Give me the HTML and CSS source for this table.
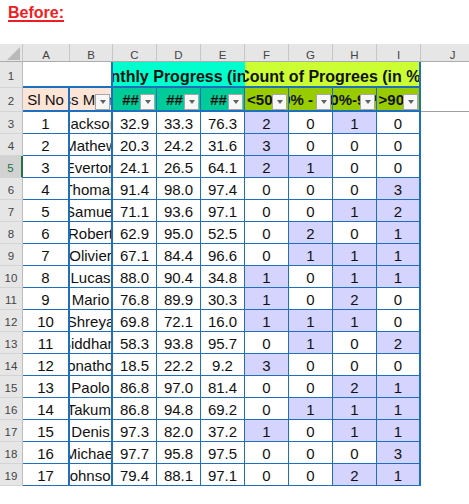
FILE: index.html
```html
<!DOCTYPE html>
<html>
<head>
<meta charset="utf-8">
<link rel="stylesheet" href="styles.css">
</head>
<body>
<div class="title"><span>Before:</span></div>
<div class="viewport">
<div class="sheet">
  <div class="ch corner"><div class="tri"></div></div>
  <div class="ch">A</div><div class="ch">B</div><div class="ch">C</div><div class="ch">D</div><div class="ch">E</div><div class="ch">F</div><div class="ch">G</div><div class="ch">H</div><div class="ch">I</div><div class="ch">J</div>

  <div class="rh">1</div>
  <div class="cell r1 cb span2"></div>
  <div class="cell r1 t1 span3 nobr bold16">Monthly Progress (in %)</div>
  <div class="cell r1 l1 ci span4 bold16">Count of Progrees (in %)</div>
  <div class="j"></div>

  <div class="rh">2</div>
  <div class="cell r2 pe ca">Sl No</div>
  <div class="cell r2 pe cb flt left"><span class="shift">Class Members</span><span class="btn"></span></div>
  <div class="cell r2 t2 flt hash bold">##<span class="btn"></span></div>
  <div class="cell r2 t2 flt hash bold">##<span class="btn"></span></div>
  <div class="cell r2 t2 flt hash bold">##<span class="btn"></span></div>
  <div class="cell r2 l2 flt bold">&lt;50%<span class="btn"></span></div>
  <div class="cell r2 l2 flt bold">50% - 70%<span class="btn"></span></div>
  <div class="cell r2 l2 flt bold">70%-90%<span class="btn"></span></div>
  <div class="cell r2 l2 ci flt bold">&gt;90%<span class="btn"></span></div>
  <div class="j freeze"></div>

  <div class="rh">3</div><div class="cell ca">1</div><div class="cell cb">Jackson</div><div class="cell">32.9</div><div class="cell">33.3</div><div class="cell">76.3</div><div class="cell hl">2</div><div class="cell">0</div><div class="cell hl">1</div><div class="cell ci">0</div><div class="j"></div>
  <div class="rh">4</div><div class="cell ca">2</div><div class="cell cb">Mathew</div><div class="cell">20.3</div><div class="cell">24.2</div><div class="cell">31.6</div><div class="cell hl">3</div><div class="cell">0</div><div class="cell">0</div><div class="cell ci">0</div><div class="j"></div>
  <div class="rh act">5</div><div class="cell ca">3</div><div class="cell cb">Everton</div><div class="cell">24.1</div><div class="cell">26.5</div><div class="cell">64.1</div><div class="cell hl">2</div><div class="cell hl">1</div><div class="cell">0</div><div class="cell ci">0</div><div class="j"></div>
  <div class="rh">6</div><div class="cell ca">4</div><div class="cell cb">Thomas</div><div class="cell">91.4</div><div class="cell">98.0</div><div class="cell">97.4</div><div class="cell">0</div><div class="cell">0</div><div class="cell">0</div><div class="cell ci hl">3</div><div class="j"></div>
  <div class="rh">7</div><div class="cell ca">5</div><div class="cell cb">Samuel</div><div class="cell">71.1</div><div class="cell">93.6</div><div class="cell">97.1</div><div class="cell">0</div><div class="cell">0</div><div class="cell hl">1</div><div class="cell ci hl">2</div><div class="j"></div>
  <div class="rh">8</div><div class="cell ca">6</div><div class="cell cb">Robert</div><div class="cell">62.9</div><div class="cell">95.0</div><div class="cell">52.5</div><div class="cell">0</div><div class="cell hl">2</div><div class="cell">0</div><div class="cell ci hl">1</div><div class="j"></div>
  <div class="rh">9</div><div class="cell ca">7</div><div class="cell cb">Olivier</div><div class="cell">67.1</div><div class="cell">84.4</div><div class="cell">96.6</div><div class="cell">0</div><div class="cell hl">1</div><div class="cell hl">1</div><div class="cell ci hl">1</div><div class="j"></div>
  <div class="rh">10</div><div class="cell ca">8</div><div class="cell cb">Lucas</div><div class="cell">88.0</div><div class="cell">90.4</div><div class="cell">34.8</div><div class="cell hl">1</div><div class="cell">0</div><div class="cell hl">1</div><div class="cell ci hl">1</div><div class="j"></div>
  <div class="rh">11</div><div class="cell ca">9</div><div class="cell cb">Mario</div><div class="cell">76.8</div><div class="cell">89.9</div><div class="cell">30.3</div><div class="cell hl">1</div><div class="cell">0</div><div class="cell hl">2</div><div class="cell ci">0</div><div class="j"></div>
  <div class="rh">12</div><div class="cell ca">10</div><div class="cell cb">Shreya</div><div class="cell">69.8</div><div class="cell">72.1</div><div class="cell">16.0</div><div class="cell hl">1</div><div class="cell hl">1</div><div class="cell hl">1</div><div class="cell ci">0</div><div class="j"></div>
  <div class="rh">13</div><div class="cell ca">11</div><div class="cell cb">Siddhant</div><div class="cell">58.3</div><div class="cell">93.8</div><div class="cell">95.7</div><div class="cell">0</div><div class="cell hl">1</div><div class="cell">0</div><div class="cell ci hl">2</div><div class="j"></div>
  <div class="rh">14</div><div class="cell ca">12</div><div class="cell cb">Jonathon</div><div class="cell">18.5</div><div class="cell">22.2</div><div class="cell">9.2</div><div class="cell hl">3</div><div class="cell">0</div><div class="cell">0</div><div class="cell ci">0</div><div class="j"></div>
  <div class="rh">15</div><div class="cell ca">13</div><div class="cell cb">Paolo</div><div class="cell">86.8</div><div class="cell">97.0</div><div class="cell">81.4</div><div class="cell">0</div><div class="cell">0</div><div class="cell hl">2</div><div class="cell ci hl">1</div><div class="j"></div>
  <div class="rh">16</div><div class="cell ca">14</div><div class="cell cb">Takumi</div><div class="cell">86.8</div><div class="cell">94.8</div><div class="cell">69.2</div><div class="cell">0</div><div class="cell hl">1</div><div class="cell hl">1</div><div class="cell ci hl">1</div><div class="j"></div>
  <div class="rh">17</div><div class="cell ca">15</div><div class="cell cb">Denis</div><div class="cell">97.3</div><div class="cell">82.0</div><div class="cell">37.2</div><div class="cell hl">1</div><div class="cell">0</div><div class="cell hl">1</div><div class="cell ci hl">1</div><div class="j"></div>
  <div class="rh">18</div><div class="cell ca">16</div><div class="cell cb">Michael</div><div class="cell">97.7</div><div class="cell">95.8</div><div class="cell">97.5</div><div class="cell">0</div><div class="cell">0</div><div class="cell">0</div><div class="cell ci hl">3</div><div class="j"></div>
  <div class="rh">19</div><div class="cell ca">17</div><div class="cell cb">Johnson</div><div class="cell">79.4</div><div class="cell">88.1</div><div class="cell">97.1</div><div class="cell">0</div><div class="cell">0</div><div class="cell hl">2</div><div class="cell ci hl">1</div><div class="j"></div>
</div>
</div>
</body>
</html>
```
FILE: styles.css
```css
html, body {
  margin: 0;
  padding: 0;
  overflow: hidden;
  background: #ffffff;
}
body {
  font-family: "Liberation Sans", Arial, sans-serif;
  color: #111111;
}
.title {
  height: 44px;
  box-sizing: border-box;
  padding: 4px 0 0 8px;
  line-height: 18px;
}
.title span {
  color: #ee1c24;
  font-weight: bold;
  font-size: 16px;
  text-decoration: underline;
  text-decoration-thickness: 2px;
  text-underline-offset: 2px;
}
.viewport {
  width: 469px;
  overflow: hidden;
}
.sheet {
  display: grid;
  grid-template-columns: 23px 47px 43px repeat(7, 44px) 64px;
  grid-template-rows: 18px 26px 24px repeat(17, 22px);
  width: 485px;
}
.ch {
  background: #e6e6e6;
  border-right: 1px solid #c6c6c6;
  border-bottom: 1px solid #ababab;
  box-sizing: border-box;
  display: flex;
  align-items: center;
  justify-content: center;
  padding-top: 4px;
  font-size: 11.5px;
  color: #444444;
}
.corner {
  position: relative;
  padding: 0;
}
.tri {
  position: absolute;
  right: 2px;
  bottom: 1px;
  width: 0;
  height: 0;
  border-left: 13px solid transparent;
  border-bottom: 13px solid #b9b9b9;
}
.rh {
  background: #e6e6e6;
  border-right: 1px solid #bdbdbd;
  border-bottom: 1px solid #d4d4d4;
  box-sizing: border-box;
  display: flex;
  align-items: center;
  justify-content: center;
  padding-top: 2px;
  font-size: 11.5px;
  color: #444444;
}
.rh.act {
  background: #d2d2d2;
  color: #217346;
  border-right: 2px solid #217346;
}
.cell {
  box-sizing: border-box;
  border-right: 1px solid #1e6fbe;
  border-bottom: 1px solid #1e6fbe;
  display: flex;
  align-items: flex-end;
  justify-content: center;
  padding-bottom: 1px;
  overflow: hidden;
  white-space: nowrap;
  font-size: 15px;
  background: #ffffff;
}
.ca, .cb, .ci {
  border-right-width: 2px;
}
.span2 { grid-column: span 2; }
.span3 { grid-column: span 3; }
.span4 { grid-column: span 4; }
.nobr { border-right: none; }
.r1 {
  border-bottom-width: 2px;
  padding-bottom: 0;
}
.r2 {
  border-bottom-width: 2px;
  align-items: center;
  padding-bottom: 0;
}
.bold16 {
  font-weight: bold;
  font-size: 16px;
}
.bold { font-weight: bold; }
.t1 { background: #00ffcc; }
.t2 { background: #00cc99; }
.l1 { background: #ccff33; }
.l2 { background: #99cc00; }
.pe { background: #fce4d6; }
.hl { background: #d4d4ff; }
.flt { position: relative; }
.hash { padding-right: 8px; }
.left { justify-content: flex-start; }
.shift { margin-left: -29px; }
.btn {
  position: absolute;
  right: 1px;
  bottom: 0;
  width: 15px;
  height: 16px;
  box-sizing: border-box;
  border: 1px solid #a6a6a6;
  background: #f7f7f7;
  display: flex;
  align-items: center;
  justify-content: center;
}
.btn::after {
  content: "";
  width: 0;
  height: 0;
  border-left: 3.5px solid transparent;
  border-right: 3.5px solid transparent;
  border-top: 4px solid #606060;
}
.j {
  background: #ffffff;
}
.freeze {
  border-bottom: 1px solid #a0a0a0;
  box-sizing: border-box;
}
```
